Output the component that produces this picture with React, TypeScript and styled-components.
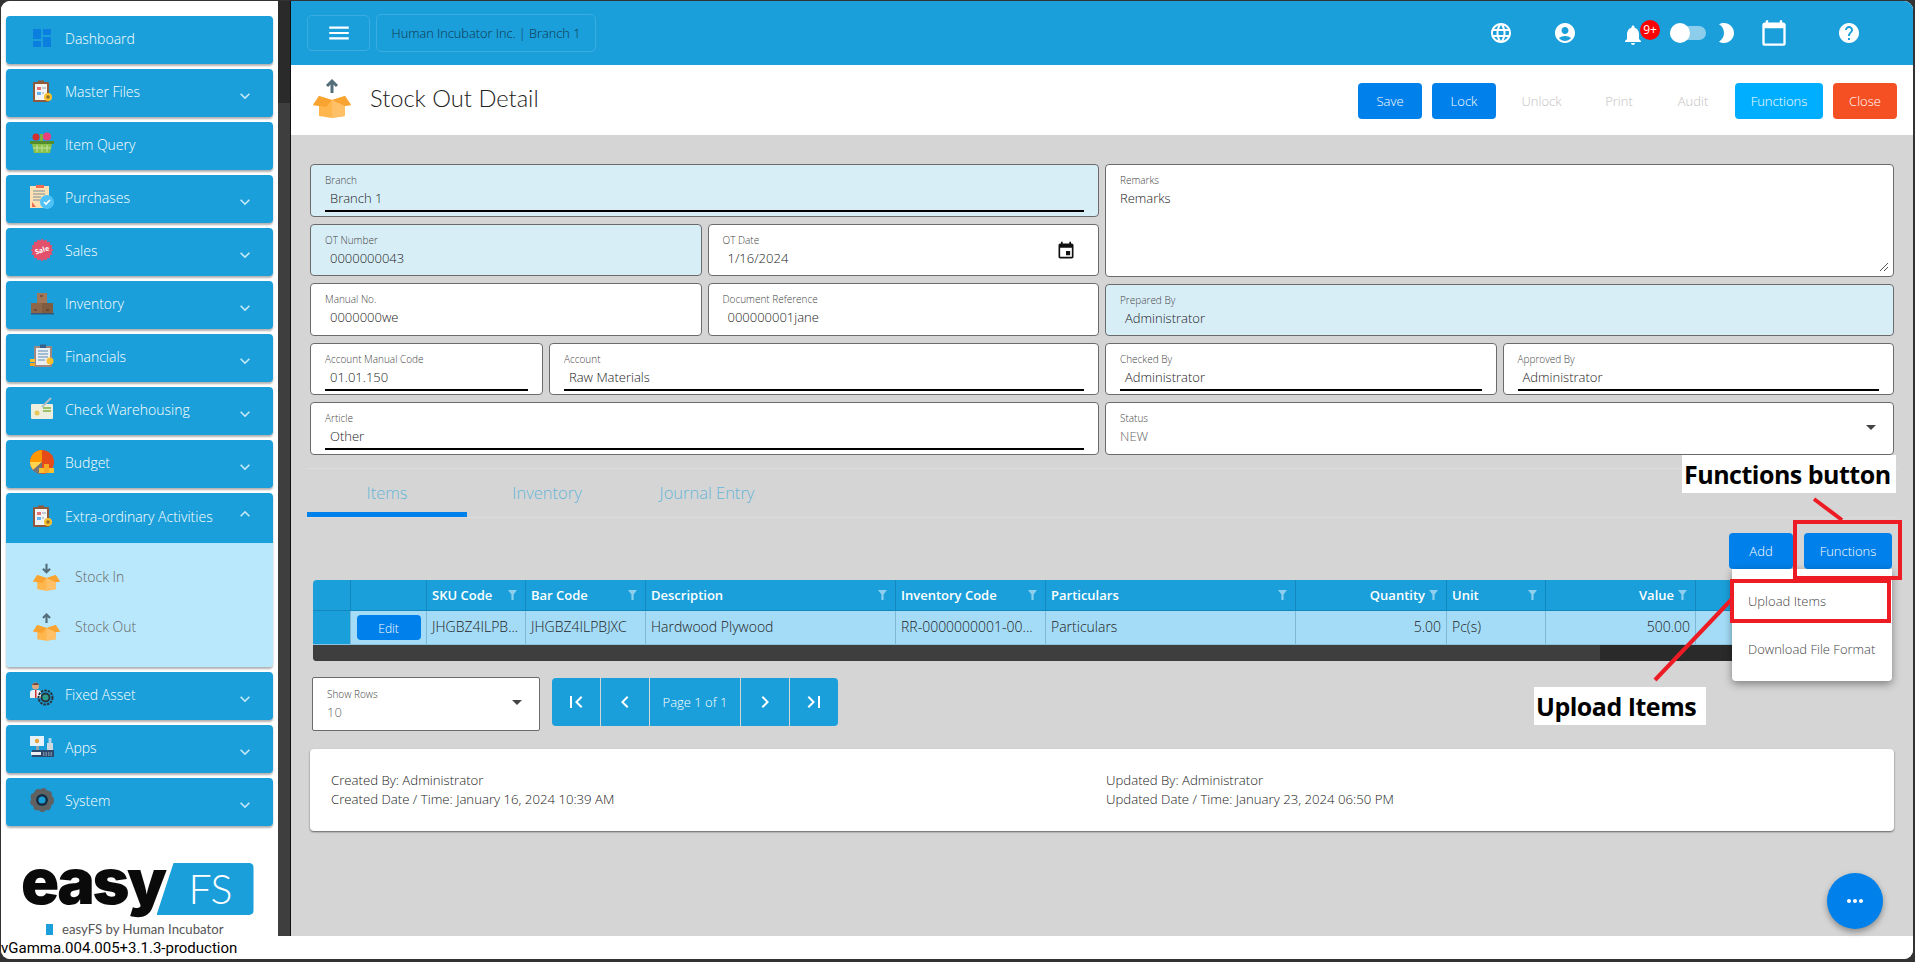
import React from "react";
import styled, { createGlobalStyle } from "styled-components";
import {
  MdLanguage,
  MdAccountCircle,
  MdNotifications,
  MdBrightness2,
  MdCalendarToday,
  MdHelp,
  MdMenu,
  MdEvent,
  MdArrowDropDown,
  MdFirstPage,
  MdLastPage,
  MdChevronLeft,
  MdChevronRight,
  MdMoreHoriz,
  MdExpandMore,
  MdExpandLess,
  MdDashboard,
} from "react-icons/md";

const BLUE = "#1a9fda";
const BTN = "#0080ea";
const FONT = `"Open Sans", "Liberation Sans", sans-serif`;

const GlobalStyle = createGlobalStyle`
  html, body {
    margin: 0;
    padding: 0;
    height: 100%;
    background: #333;
    overflow: hidden;
  }
  body {
    font-family: ${FONT};
    font-weight: 300;
  }
  * { box-sizing: border-box; }
`;

const Window = styled.div`
  position: relative;
  margin: 1px 0 0 1px;
  width: 1912px;
  height: 958px;
  background: #fff;
  border-radius: 9px;
  overflow: hidden;
  display: flex;
  flex-direction: column;
`;

const Body = styled.div`
  display: flex;
  height: 935px;
`;

const Sidebar = styled.aside`
  width: 277px;
  padding: 15px 5px 0;
  display: flex;
  flex-direction: column;
  gap: 5px;
  background: #fff;
`;

const NavItem = styled.div<{ $open?: boolean }>`
  height: ${(p) => (p.$open ? 50 : 48)}px;
  flex: none;
  display: flex;
  align-items: center;
  padding: 0 18px 4px 24px;
  background: ${BLUE};
  color: #fff;
  border-radius: ${(p) => (p.$open ? "4px 4px 0 0" : "4px")};
  box-shadow: ${(p) => (p.$open ? "none" : "0 2px 2px rgba(0,0,0,.3)")};
  font-size: 14px;
`;

const NavIcon = styled.span`
  width: 24px;
  height: 24px;
  flex: none;
  display: flex;
  align-items: center;
  justify-content: center;
  margin-right: 11px;
  color: #0a7fe0;
`;

const NavLabel = styled.span`
  flex: 1;
  white-space: nowrap;
`;

const Chevron = styled.span<{ $up?: boolean }>`
  display: flex;
  font-size: 20px;
  color: #c4e8f8;
  margin-top: ${(p) => (p.$up ? -4 : 10)}px;
`;

const NavGroup = styled.div`
  flex: none;
  display: flex;
  flex-direction: column;
  border-radius: 4px;
  box-shadow: 0 2px 2px rgba(0, 0, 0, 0.3);
`;

const SubPanel = styled.div`
  height: 124px;
  background: #b9e8fd;
  border-radius: 0 0 4px 4px;
  padding-top: 8px;
`;

const SubItem = styled.div`
  height: 50px;
  display: flex;
  align-items: center;
  padding-left: 27px;
  gap: 15px;
  color: #666;
  font-size: 14px;
`;

const Logo = styled.div`
  margin-top: auto;
  display: flex;
  flex-direction: column;
  padding-left: 15px;
`;

const LogoRow = styled.div`
  display: flex;
  align-items: flex-start;
  height: 56px;
`;

const LogoEasy = styled.span`
  font-family: Inter, "Liberation Sans", sans-serif;
  font-weight: 900;
  font-size: 63px;
  line-height: 50px;
  letter-spacing: -2.5px;
  color: #0a0a0a;
`;

const LogoFS = styled.span`
  flex: none;
  width: 97px;
  height: 52px;
  margin-left: -8px;
  margin-top: 7px;
  background: ${BLUE};
  clip-path: polygon(17px 0, 100% 0, 100% 100%, 0 100%);
  border-radius: 0 5px 5px 0;
  color: #fff;
  font-family: Lato, sans-serif;
  font-weight: 300;
  font-size: 41px;
  line-height: 52px;
  padding-left: 32px;
`;

const LogoCaption = styled.div`
  display: flex;
  align-items: center;
  font-family: Lato, sans-serif;
  font-weight: 400;
  font-size: 13.2px;
  color: #555;
  padding-left: 25px;
  gap: 9px;
  height: 14px;
  margin-top: 10px;
`;

const LogoMark = styled.span`
  width: 7px;
  height: 11px;
  background: ${BLUE};
`;

const Scrollbar = styled.div`
  width: 12px;
  background: #3e3e3e;
  flex: none;
`;

const ScrollThumb = styled.div`
  height: 102px;
  background: #2a2a2a;
`;

const Main = styled.main`
  flex: 1;
  display: flex;
  flex-direction: column;
  border-left: 1px solid #111;
  background: #d5d5d5;
`;

const TopBar = styled.header`
  height: 64px;
  flex: none;
  background: ${BLUE};
  display: flex;
  align-items: center;
  justify-content: space-between;
  padding: 0 52px 0 16px;
`;

const TopGroup = styled.div`
  display: flex;
  align-items: center;
  gap: 6px;
`;

const TopIcons = styled.div`
  display: flex;
  align-items: center;
`;

const MenuBox = styled.button`
  width: 63px;
  height: 36px;
  border: 1px solid rgba(255, 255, 255, 0.14);
  border-radius: 5px;
  background: transparent;
  color: #fff;
  display: flex;
  align-items: center;
  justify-content: center;
  font-size: 26px;
  padding: 0;
`;

const BranchBox = styled.div`
  width: 220px;
  height: 38px;
  border: 1px solid rgba(255, 255, 255, 0.14);
  border-radius: 5px;
  display: flex;
  align-items: center;
  justify-content: center;
  font-size: 12.75px;
  color: #12344a;
`;

const TopIcon = styled.span<{ $ml?: number; $size?: number; $mt?: number }>`
  position: relative;
  display: flex;
  margin-left: ${(p) => p.$ml ?? 0}px;
  margin-top: ${(p) => p.$mt ?? 0}px;
  font-size: ${(p) => p.$size ?? 24}px;
  color: #fff;
`;

const Badge = styled.span`
  position: absolute;
  left: 19px;
  top: -3px;
  width: 20px;
  height: 20px;
  border-radius: 50%;
  background: #f00;
  color: #fff;
  font-size: 12px;
  font-weight: 400;
  display: flex;
  align-items: center;
  justify-content: center;
`;

const Toggle = styled.span`
  position: relative;
  margin-left: 25px;
  width: 36px;
  height: 14px;
  border-radius: 7px;
  background: #8ccdeb;
`;

const ToggleKnob = styled.span`
  position: absolute;
  left: 0;
  top: -3px;
  width: 20px;
  height: 20px;
  border-radius: 50%;
  background: #fff;
`;

const PageHead = styled.div`
  height: 70px;
  flex: none;
  background: #fff;
  display: flex;
  align-items: center;
  padding: 0 16px 4px 22px;
`;

const PageTitle = styled.h1`
  margin: 0 auto 0 19px;
  font-family: Lato, ${FONT};
  font-size: 23.7px;
  font-weight: 300;
  color: #222;
`;

const HeadActions = styled.div`
  display: flex;
  gap: 10px;
  margin-top: 6px;
`;

const ActionButton = styled.button<{ $tone?: string; $w?: number }>`
  width: ${(p) => p.$w ?? 64}px;
  height: 36px;
  border: 0;
  border-radius: 4px;
  padding: 0;
  font-family: inherit;
  font-weight: 300;
  font-size: 13px;
  color: ${(p) => (p.$tone ? "#fff" : "#c4c0c0")};
  background: ${(p) => p.$tone ?? "transparent"};
`;

const Content = styled.div`
  flex: 1;
  min-height: 0;
  padding: 29px 19px 0;
  display: flex;
  flex-direction: column;
`;

const FormGrid = styled.div`
  display: grid;
  grid-template-columns: 789px 789px;
  gap: 6px;
`;

const FormColumn = styled.div`
  display: flex;
  flex-direction: column;
  gap: 7px;
`;

const FormRow = styled.div`
  display: flex;
  gap: 6px;
`;

const Field = styled.div<{ $locked?: boolean; $w?: number; $h?: number }>`
  position: relative;
  flex: ${(p) => (p.$w ? `0 0 ${p.$w}px` : 1)};
  min-width: 0;
  height: ${(p) => p.$h ?? 52.5}px;
  border: 1px solid #6b6b6b;
  border-radius: 4px;
  background: ${(p) => (p.$locked ? "#d8eef7" : "#fff")};
  padding: 8px 14px 0;
`;

const FieldLabel = styled.div`
  font-size: 10px;
  line-height: 14px;
  color: #444;
`;

const FieldValue = styled.div<{ $line?: boolean; $muted?: boolean; $flush?: boolean }>`
  font-size: 13px;
  line-height: 20px;
  margin-top: 1px;
  padding-left: ${(p) => (p.$flush ? 0 : 5)}px;
  height: 24px;
  color: ${(p) => (p.$muted ? "#666" : "#222")};
  border-bottom: ${(p) => (p.$line ? "2px solid #000" : "0")};
`;

const FieldIcon = styled.span`
  position: absolute;
  right: 22px;
  top: 16px;
  display: flex;
  font-size: 20px;
  color: #111;
`;

const FieldCaret = styled.span`
  position: absolute;
  right: 10px;
  top: 12px;
  display: flex;
  font-size: 24px;
  color: #444;
`;

const Resize = styled.svg`
  position: absolute;
  right: 4px;
  bottom: 4px;
`;

const Tabs = styled.div`
  flex: none;
  margin: 13px -4px 0 -3px;
  height: 50px;
  display: flex;
  align-items: stretch;
  border-top: 1px solid #dcdcdc;
  border-bottom: 1px solid #dcdcdc;
`;

const Tab = styled.div<{ $active?: boolean }>`
  width: 160px;
  display: flex;
  align-items: center;
  justify-content: center;
  padding-top: 5px;
  font-size: 16.5px;
  color: #66b6d9;
  border-bottom: 5px solid ${(p) => (p.$active ? BTN : "transparent")};
`;

const TableActions = styled.div`
  flex: none;
  display: flex;
  justify-content: flex-end;
  gap: 11px;
  margin: 15px 2px 11px 0;
`;

const ItemsTable = styled.div`
  flex: none;
  margin: 0 5px 0 3px;
  border-radius: 4px;
  overflow: hidden;
`;

const TableRow = styled.div<{ $head?: boolean }>`
  display: grid;
  grid-template-columns: 38px 76px 99px 120px 250px 150px 250px 151px 99px 150px 193px;
  height: ${(p) => (p.$head ? 31 : 34)}px;
  background: ${(p) => (p.$head ? BLUE : "#a4dcf7")};
  border-bottom: 1px solid ${(p) => (p.$head ? "#1288bf" : "#8cc4dd")};
`;

const HeadCell = styled.div<{ $right?: boolean }>`
  display: flex;
  align-items: center;
  justify-content: ${(p) => (p.$right ? "flex-end" : "space-between")};
  gap: 4px;
  padding: 0 8px 0 5px;
  border-right: 1px solid #1288bf;
  color: #fff;
  font-size: 13px;
  font-weight: 600;
  white-space: nowrap;
`;

const BodyCell = styled.div<{ $right?: boolean; $gutter?: boolean }>`
  padding: 0 5px;
  line-height: 32px;
  border-right: 1px solid #7fb8d3;
  background: ${(p) => (p.$gutter ? BLUE : "transparent")};
  text-align: ${(p) => (p.$right ? "right" : "left")};
  color: #222;
  font-size: 14px;
  white-space: nowrap;
`;

const EditCell = styled.div`
  display: flex;
  align-items: center;
  justify-content: center;
  border-right: 1px solid #7fb8d3;
`;

const EditButton = styled.button`
  width: 64px;
  height: 25px;
  border: 0;
  border-radius: 4px;
  background: ${BTN};
  color: #fff;
  font-family: inherit;
  font-weight: 300;
  font-size: 12px;
  padding: 2px 0 0;
`;

const ScrollTrack = styled.div`
  height: 16px;
  display: flex;
  background: #2a2a2a;
`;

const ScrollBarThumb = styled.div`
  width: 1287px;
  background: #3e3e3e;
`;

const PagerRow = styled.div`
  flex: none;
  display: flex;
  align-items: flex-start;
  gap: 12px;
  margin: 16px 0 0 2px;
`;

const RowsSelect = styled.div`
  position: relative;
  width: 228px;
  height: 54px;
  background: #fff;
  border: 1px solid #6b6b6b;
  border-radius: 2px;
  padding: 9px 14px 0;
`;

const Pager = styled.div`
  display: flex;
  height: 48px;
  gap: 1px;
  margin-top: 1px;
  border-radius: 4px;
  overflow: hidden;
`;

const PagerButton = styled.div<{ $w?: number }>`
  width: ${(p) => p.$w ?? 48}px;
  background: ${BLUE};
  color: #fff;
  display: flex;
  align-items: center;
  justify-content: center;
  font-size: ${(p) => (p.$w ? 13 : 24)}px;
`;

const AuditCard = styled.div`
  flex: none;
  margin-top: 18px;
  height: 82px;
  background: #fff;
  border-radius: 4px;
  box-shadow: 0 1px 2px rgba(0, 0, 0, 0.55);
  padding: 22px 21px 0;
  display: grid;
  grid-template-columns: 775px 1fr;
`;

const AuditLine = styled.div`
  font-size: 13.2px;
  line-height: 19.5px;
  color: #222;
`;

const VersionBar = styled.div`
  height: 23px;
  font-family: Roboto, "Liberation Sans", sans-serif;
  font-weight: 400;
  font-size: 15px;
  line-height: 25px;
  color: #000;
  white-space: nowrap;
  background: #fff;
`;

const Fab = styled.button`
  position: absolute;
  left: 1826px;
  top: 872px;
  width: 56px;
  height: 56px;
  border: 0;
  border-radius: 50%;
  padding: 0;
  background: ${BTN};
  color: #fff;
  font-size: 24px;
  display: flex;
  align-items: center;
  justify-content: center;
  box-shadow: 0 3px 6px rgba(0, 0, 0, 0.35);
`;

const Dropdown = styled.div`
  position: absolute;
  left: 1731px;
  top: 568px;
  width: 160px;
  height: 112px;
  background: #fff;
  border-radius: 0 0 4px 4px;
  box-shadow: 0 3px 8px rgba(0, 0, 0, 0.4);
  padding-top: 8px;
`;

const DropdownItem = styled.div`
  height: 48px;
  display: flex;
  align-items: center;
  padding-left: 16px;
  font-size: 13px;
  color: #444;
`;

const CalloutLabel = styled.div<{ $x: number; $y: number; $w: number }>`
  position: absolute;
  left: ${(p) => p.$x}px;
  top: ${(p) => p.$y}px;
  width: ${(p) => p.$w}px;
  height: 38px;
  padding-left: 2px;
  background: #fff;
  color: #000;
  display: flex;
  align-items: center;
  font-family: "Open Sans", sans-serif;
  font-weight: 700;
  font-size: 25px;
  letter-spacing: -0.5px;
  white-space: nowrap;
`;

const CalloutBox = styled.div<{ $x: number; $y: number; $w: number; $h: number }>`
  position: absolute;
  left: ${(p) => p.$x}px;
  top: ${(p) => p.$y}px;
  width: ${(p) => p.$w}px;
  height: ${(p) => p.$h}px;
  border: 4px solid #ed1c24;
`;

const CalloutLines = styled.svg`
  position: absolute;
  left: 0;
  top: 0;
  pointer-events: none;
`;

const FilterIcon = () => (
  <svg width="9" height="10" viewBox="0 0 9 10">
    <path d="M0 0h9L5.6 4.6V10H3.4V4.6z" fill="rgba(255,255,255,.5)" />
  </svg>
);

const BoxIcon = ({ up, w = 27, h = 31 }: { up: boolean; w?: number; h?: number }) => (
  <svg width={w} height={h} viewBox="0 0 38 40">
    <path
      d={up ? "M19 15V3M14 8l5-5 5 5" : "M19 2v12M14 9l5 5 5-5"}
      fill="none"
      stroke="#546e7a"
      strokeWidth="3"
    />
    <path d="M19 22l-13-4L0 27l6 1v10l13 2 13-2V28l6-1-6-9z" fill="#ffb74d" />
    <path d="M19 22L6 18l-6 9 13 2zM19 22l13-4 6 9-13 2z" fill="#f9a431" />
    <path d="M19 22v18l13-2V28z" fill="#ffc067" />
  </svg>
);

const ClipboardIcon = () => (
  <svg width="24" height="24" viewBox="0 0 24 24">
    <rect x="3" y="3" width="16" height="20" rx="1" fill="#8d5a3b" />
    <rect x="5" y="5" width="12" height="16" fill="#f3f3f3" />
    <rect x="8" y="1.5" width="6" height="3" fill="#8d5a3b" />
    <rect x="7" y="8" width="4" height="3" fill="#e57373" />
    <rect x="7" y="13" width="4" height="3" fill="#64b5f6" />
    <path d="M12 9h4M12 14h2" stroke="#90a4ae" strokeWidth="1" />
    <circle cx="18" cy="18" r="4" fill="#fbc02d" />
    <circle cx="18" cy="18" r="1.8" fill="#8d6e2b" />
  </svg>
);

const BasketIcon = () => (
  <svg width="24" height="24" viewBox="0 0 24 24">
    <circle cx="6" cy="5" r="3.5" fill="#d32f2f" />
    <circle cx="17" cy="4.5" r="4" fill="#ec407a" />
    <rect x="10" y="2" width="3" height="7" fill="#7cb342" />
    <rect x="0" y="9" width="24" height="3" fill="#558b2f" />
    <path d="M2 12h20l-2 9H4z" fill="#8bc34a" />
    <path d="M7 13v7M12 13v7M17 13v7M3 16h18" stroke="#c5e1a5" strokeWidth="1" />
  </svg>
);

const OrderIcon = () => (
  <svg width="24" height="24" viewBox="0 0 24 24">
    <rect x="0" y="1" width="19" height="22" fill="#ffe0b2" />
    <rect x="6" y="0" width="8" height="3" fill="#ef6c4f" />
    <path d="M3 6h12M3 9h12M3 12h8M3 15h8" stroke="#78909c" strokeWidth="1" />
    <path d="M2 17l4 5H2z" fill="#ef6c4f" />
    <circle cx="17" cy="17" r="7" fill="#4fc3f7" />
    <path d="M14 17l2 2 4-4" fill="none" stroke="#fff" strokeWidth="1.6" />
  </svg>
);

const burst = Array.from({ length: 32 }, (_, i) => {
  const r = i % 2 ? 9.5 : 11.5;
  const a = (i * Math.PI) / 16;
  return `${(12 + r * Math.cos(a)).toFixed(2)},${(12 + r * Math.sin(a)).toFixed(2)}`;
}).join(" ");

const SaleIcon = () => (
  <svg width="24" height="24" viewBox="0 0 24 24">
    <polygon points={burst} fill="#e2506b" />
    <text
      x="12"
      y="14.5"
      textAnchor="middle"
      fontFamily="Open Sans, sans-serif"
      fontWeight="700"
      fontSize="7"
      fill="#fff"
      transform="rotate(-18 12 12)"
    >
      Sale
    </text>
  </svg>
);

const CratesIcon = () => (
  <svg width="24" height="24" viewBox="0 0 24 24">
    <rect x="7" y="2" width="10" height="10" fill="#a1785a" />
    <rect x="1" y="12" width="11" height="10" fill="#8d6748" />
    <rect x="12" y="12" width="11" height="10" fill="#7f5c40" />
    <rect x="1" y="22" width="23" height="1.5" fill="#34587a" />
    <path d="M10 5h3M4 19h3M16 19h3" stroke="#4e342e" strokeWidth="1.2" />
  </svg>
);

const LedgerIcon = () => (
  <svg width="24" height="24" viewBox="0 0 24 24">
    <rect x="4" y="2" width="18" height="21" rx="1" fill="#a1887f" />
    <rect x="6" y="4" width="14" height="17" fill="#eceff1" />
    <rect x="10" y="0.5" width="6" height="3.5" fill="#37618a" />
    <path d="M8 7h10M8 10h10M8 13h10M8 16h7" stroke="#5d89b0" strokeWidth="1" />
    <circle cx="20" cy="17" r="3.5" fill="#fbc02d" />
    <rect x="0" y="15" width="5" height="3" fill="#fbc02d" />
    <rect x="0" y="19" width="5" height="3" fill="#f9a825" />
  </svg>
);

const ChequeIcon = () => (
  <svg width="24" height="24" viewBox="0 0 24 24">
    <rect x="1" y="7" width="22" height="15" rx="1" fill="#eeeede" />
    <path d="M13 11h8M13 14h8" stroke="#7cb342" strokeWidth="1.4" />
    <circle cx="7" cy="16" r="2.5" fill="#e8c65a" />
    <path d="M12 10L21 1" stroke="#b0bec5" strokeWidth="2" />
  </svg>
);

const PieIcon = () => (
  <svg width="24" height="24" viewBox="0 0 24 24">
    <circle cx="12" cy="12" r="12" fill="#e64a19" />
    <path d="M12 12V0A12 12 0 0 0 0 12z" fill="#ff9800" />
    <path d="M12 12L0 12a12 12 0 0 0 3 8z" fill="#ffd54f" />
    <path d="M12 12l-9 8a12 12 0 0 0 9 4z" fill="#757575" />
    <rect x="9" y="18" width="5" height="5" fill="#fbc02d" />
    <rect x="14" y="14" width="5" height="9" fill="#f9a825" />
    <rect x="19" y="18" width="5" height="5" fill="#fbc02d" />
  </svg>
);

const AssetIcon = () => (
  <svg width="24" height="24" viewBox="0 0 24 24">
    <circle cx="5.5" cy="4" r="3.5" fill="#e0a77e" />
    <path d="M5 1a3.5 3.5 0 0 1 4 2H2a3.5 3.5 0 0 1 3-2z" fill="#6d4c41" />
    <path d="M0 16V11a3 3 0 0 1 3-3h5a3 3 0 0 1 3 3v5z" fill="#eceff1" />
    <rect x="5" y="8" width="1.5" height="8" fill="#d32f2f" />
    <circle cx="15.5" cy="15.5" r="7" fill="none" stroke="#263238" strokeWidth="2" strokeDasharray="2.5 1" />
    <circle cx="15.5" cy="15.5" r="5" fill="#263238" />
    <circle cx="15.5" cy="15.5" r="3" fill="#2e9b8f" />
  </svg>
);

const RegisterIcon = () => (
  <svg width="24" height="24" viewBox="0 0 24 24">
    <rect x="0" y="1" width="14" height="10" fill="#e3f2fd" />
    <rect x="6" y="11" width="3" height="4" fill="#90a4ae" />
    <rect x="2" y="15" width="22" height="7" fill="#2d4a6e" />
    <path d="M13 18h10M13 20h10" stroke="#b0bec5" strokeWidth="1" strokeDasharray="1.5 1" />
    <rect x="1" y="17" width="10" height="3" fill="#eceff1" />
    <rect x="17" y="8" width="6" height="7" fill="#cfd8dc" />
    <rect x="18.5" y="3" width="3" height="5" fill="#b0d4e8" />
    <circle cx="7" cy="6" r="2.2" fill="#e8a33a" />
  </svg>
);

const GearIcon = () => (
  <svg width="24" height="24" viewBox="0 0 24 24">
    <circle cx="12" cy="12" r="8.5" fill="none" stroke="#616161" strokeWidth="5" />
    <circle cx="12" cy="12" r="10.5" fill="none" stroke="#616161" strokeWidth="3" strokeDasharray="4 3" />
    <circle cx="12" cy="12" r="6" fill="#1a2a3a" />
    <circle cx="12" cy="12" r="3.5" fill="#1a9fda" />
  </svg>
);

type NavEntry = { label: string; icon: React.ReactNode; more?: boolean };

const topNav: NavEntry[] = [
  { label: "Dashboard", icon: <MdDashboard size={30} /> },
  { label: "Master Files", icon: <ClipboardIcon />, more: true },
  { label: "Item Query", icon: <BasketIcon /> },
  { label: "Purchases", icon: <OrderIcon />, more: true },
  { label: "Sales", icon: <SaleIcon />, more: true },
  { label: "Inventory", icon: <CratesIcon />, more: true },
  { label: "Financials", icon: <LedgerIcon />, more: true },
  { label: "Check Warehousing", icon: <ChequeIcon />, more: true },
  { label: "Budget", icon: <PieIcon />, more: true },
];

const bottomNav: NavEntry[] = [
  { label: "Fixed Asset", icon: <AssetIcon />, more: true },
  { label: "Apps", icon: <RegisterIcon />, more: true },
  { label: "System", icon: <GearIcon />, more: true },
];

const renderNav = (item: NavEntry) => (
  <NavItem key={item.label}>
    <NavIcon>{item.icon}</NavIcon>
    <NavLabel>{item.label}</NavLabel>
    {item.more && (
      <Chevron>
        <MdExpandMore />
      </Chevron>
    )}
  </NavItem>
);

const columns = [
  { title: "" },
  { title: "" },
  { title: "SKU Code", filter: true },
  { title: "Bar Code", filter: true },
  { title: "Description", filter: true },
  { title: "Inventory Code", filter: true },
  { title: "Particulars", filter: true },
  { title: "Quantity", filter: true, right: true },
  { title: "Unit", filter: true },
  { title: "Value", filter: true, right: true },
  { title: "" },
];

function App() {
  return (
    <>
      <GlobalStyle />
      <Window>
        <Body>
          <Sidebar>
            {topNav.map(renderNav)}
            <NavGroup>
              <NavItem $open>
                <NavIcon>
                  <ClipboardIcon />
                </NavIcon>
                <NavLabel>Extra-ordinary Activities</NavLabel>
                <Chevron $up>
                  <MdExpandLess />
                </Chevron>
              </NavItem>
              <SubPanel>
                <SubItem>
                  <BoxIcon up={false} />
                  Stock In
                </SubItem>
                <SubItem>
                  <BoxIcon up />
                  Stock Out
                </SubItem>
              </SubPanel>
            </NavGroup>
            {bottomNav.map(renderNav)}
            <Logo>
              <LogoRow>
                <LogoEasy>easy</LogoEasy>
                <LogoFS>FS</LogoFS>
              </LogoRow>
              <LogoCaption>
                <LogoMark />
                easyFS by Human Incubator
              </LogoCaption>
            </Logo>
          </Sidebar>
          <Scrollbar>
            <ScrollThumb />
          </Scrollbar>
          <Main>
            <TopBar>
              <TopGroup>
                <MenuBox>
                  <MdMenu />
                </MenuBox>
                <BranchBox>Human Incubator Inc. | Branch 1</BranchBox>
              </TopGroup>
              <TopIcons>
                <TopIcon $mt={-1}>
                  <MdLanguage />
                </TopIcon>
                <TopIcon $ml={40} $mt={-1}>
                  <MdAccountCircle />
                </TopIcon>
                <TopIcon $ml={44} $mt={3}>
                  <MdNotifications />
                  <Badge>9+</Badge>
                </TopIcon>
                <Toggle>
                  <ToggleKnob />
                </Toggle>
                <TopIcon $ml={8}>
                  <MdBrightness2 />
                </TopIcon>
                <TopIcon $ml={22} $size={28} $mt={-1}>
                  <MdCalendarToday />
                </TopIcon>
                <TopIcon $ml={49} $mt={-1}>
                  <MdHelp />
                </TopIcon>
              </TopIcons>
            </TopBar>
            <PageHead>
              <BoxIcon up w={38} h={40} />
              <PageTitle>Stock Out Detail</PageTitle>
              <HeadActions>
                <ActionButton $tone={BTN}>Save</ActionButton>
                <ActionButton $tone={BTN}>Lock</ActionButton>
                <ActionButton $w={71}>Unlock</ActionButton>
                <ActionButton>Print</ActionButton>
                <ActionButton>Audit</ActionButton>
                <ActionButton $tone="#00aeff" $w={88}>
                  Functions
                </ActionButton>
                <ActionButton $tone="#f55024">Close</ActionButton>
              </HeadActions>
            </PageHead>
            <Content>
              <FormGrid>
                <FormColumn>
                  <FormRow>
                    <Field $locked>
                      <FieldLabel>Branch</FieldLabel>
                      <FieldValue $line>Branch 1</FieldValue>
                    </Field>
                  </FormRow>
                  <FormRow>
                    <Field $locked>
                      <FieldLabel>OT Number</FieldLabel>
                      <FieldValue>0000000043</FieldValue>
                    </Field>
                    <Field>
                      <FieldLabel>OT Date</FieldLabel>
                      <FieldValue>1/16/2024</FieldValue>
                      <FieldIcon>
                        <MdEvent />
                      </FieldIcon>
                    </Field>
                  </FormRow>
                  <FormRow>
                    <Field>
                      <FieldLabel>Manual No.</FieldLabel>
                      <FieldValue>0000000we</FieldValue>
                    </Field>
                    <Field>
                      <FieldLabel>Document Reference</FieldLabel>
                      <FieldValue>000000001jane</FieldValue>
                    </Field>
                  </FormRow>
                  <FormRow>
                    <Field $w={233}>
                      <FieldLabel>Account Manual Code</FieldLabel>
                      <FieldValue $line>01.01.150</FieldValue>
                    </Field>
                    <Field>
                      <FieldLabel>Account</FieldLabel>
                      <FieldValue $line>Raw Materials</FieldValue>
                    </Field>
                  </FormRow>
                  <FormRow>
                    <Field>
                      <FieldLabel>Article</FieldLabel>
                      <FieldValue $line>Other</FieldValue>
                    </Field>
                  </FormRow>
                </FormColumn>
                <FormColumn>
                  <Field $h={114}>
                    <FieldLabel>Remarks</FieldLabel>
                    <FieldValue $flush>Remarks</FieldValue>
                    <Resize width="10" height="10" viewBox="0 0 10 10">
                      <path d="M9 1L1 9M9 5L5 9" stroke="#555" strokeWidth="1" />
                    </Resize>
                  </Field>
                  <FormRow>
                    <Field $locked $h={51.5}>
                      <FieldLabel>Prepared By</FieldLabel>
                      <FieldValue>Administrator</FieldValue>
                    </Field>
                  </FormRow>
                  <FormRow>
                    <Field>
                      <FieldLabel>Checked By</FieldLabel>
                      <FieldValue $line>Administrator</FieldValue>
                    </Field>
                    <Field>
                      <FieldLabel>Approved By</FieldLabel>
                      <FieldValue $line>Administrator</FieldValue>
                    </Field>
                  </FormRow>
                  <FormRow>
                    <Field>
                      <FieldLabel>Status</FieldLabel>
                      <FieldValue $flush $muted>
                        NEW
                      </FieldValue>
                      <FieldCaret>
                        <MdArrowDropDown />
                      </FieldCaret>
                    </Field>
                  </FormRow>
                </FormColumn>
              </FormGrid>
              <Tabs>
                <Tab $active>Items</Tab>
                <Tab>Inventory</Tab>
                <Tab>Journal Entry</Tab>
              </Tabs>
              <TableActions>
                <ActionButton $tone={BTN}>Add</ActionButton>
                <ActionButton $tone={BTN} $w={88}>
                  Functions
                </ActionButton>
              </TableActions>
              <ItemsTable>
                <TableRow $head>
                  {columns.map((c, i) => (
                    <HeadCell key={i} $right={c.right}>
                      {c.title}
                      {c.filter && <FilterIcon />}
                    </HeadCell>
                  ))}
                </TableRow>
                <TableRow>
                  <BodyCell $gutter />
                  <EditCell>
                    <EditButton>Edit</EditButton>
                  </EditCell>
                  <BodyCell>JHGBZ4ILPB...</BodyCell>
                  <BodyCell>JHGBZ4ILPBJXC</BodyCell>
                  <BodyCell>Hardwood Plywood</BodyCell>
                  <BodyCell>RR-0000000001-00...</BodyCell>
                  <BodyCell>Particulars</BodyCell>
                  <BodyCell $right>5.00</BodyCell>
                  <BodyCell>Pc(s)</BodyCell>
                  <BodyCell $right>500.00</BodyCell>
                  <BodyCell />
                </TableRow>
                <ScrollTrack>
                  <ScrollBarThumb />
                </ScrollTrack>
              </ItemsTable>
              <PagerRow>
                <RowsSelect>
                  <FieldLabel>Show Rows</FieldLabel>
                  <FieldValue $flush $muted>
                    10
                  </FieldValue>
                  <FieldCaret>
                    <MdArrowDropDown />
                  </FieldCaret>
                </RowsSelect>
                <Pager>
                  <PagerButton>
                    <MdFirstPage />
                  </PagerButton>
                  <PagerButton>
                    <MdChevronLeft />
                  </PagerButton>
                  <PagerButton $w={90}>Page 1 of 1</PagerButton>
                  <PagerButton>
                    <MdChevronRight />
                  </PagerButton>
                  <PagerButton>
                    <MdLastPage />
                  </PagerButton>
                </Pager>
              </PagerRow>
              <AuditCard>
                <div>
                  <AuditLine>Created By: Administrator</AuditLine>
                  <AuditLine>Created Date / Time: January 16, 2024 10:39 AM</AuditLine>
                </div>
                <div>
                  <AuditLine>Updated By: Administrator</AuditLine>
                  <AuditLine>Updated Date / Time: January 23, 2024 06:50 PM</AuditLine>
                </div>
              </AuditCard>
            </Content>
          </Main>
        </Body>
        <VersionBar>vGamma.004.005+3.1.3-production</VersionBar>

        <Fab>
          <MdMoreHoriz />
        </Fab>
        <Dropdown>
          <DropdownItem>Upload Items</DropdownItem>
          <DropdownItem>Download File Format</DropdownItem>
        </Dropdown>
        <CalloutLines width="1912" height="958">
          <path d="M1813 498l28 21" stroke="#ed1c24" strokeWidth="4" fill="none" />
          <path d="M1731 598l-77 81" stroke="#ed1c24" strokeWidth="4" fill="none" />
        </CalloutLines>
        <CalloutBox $x={1792} $y={519} $w={109} $h={60} />
        <CalloutBox $x={1729} $y={578} $w={161} $h={44} />
        <CalloutLabel $x={1681} $y={454} $w={214}>
          Functions button
        </CalloutLabel>
        <CalloutLabel $x={1533} $y={686} $w={172}>
          Upload Items
        </CalloutLabel>
      </Window>
    </>
  );
}

export default App;
